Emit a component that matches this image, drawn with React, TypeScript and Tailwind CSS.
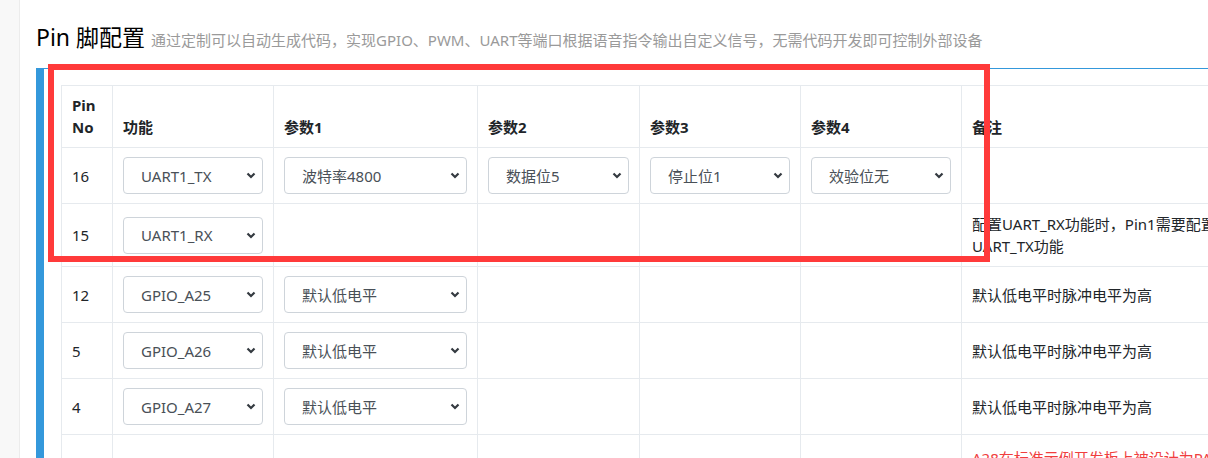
import React from "react";

type Row = {
  pin: string;
  fn: string;
  p1?: string;
  p2?: string;
  p3?: string;
  p4?: string;
  note?: React.ReactNode;
  danger?: boolean;
};

const rows: Row[] = [
  { pin: "16", fn: "UART1_TX", p1: "波特率4800", p2: "数据位5", p3: "停止位1", p4: "效验位无" },
  {
    pin: "15",
    fn: "UART1_RX",
    note: (
      <>
        配置UART_RX功能时，Pin1需要配置为
        <br />
        UART_TX功能
      </>
    ),
  },
  { pin: "12", fn: "GPIO_A25", p1: "默认低电平", note: "默认低电平时脉冲电平为高" },
  { pin: "5", fn: "GPIO_A26", p1: "默认低电平", note: "默认低电平时脉冲电平为高" },
  { pin: "4", fn: "GPIO_A27", p1: "默认低电平", note: "默认低电平时脉冲电平为高" },
  {
    pin: "3",
    fn: "GPIO_A28",
    p1: "默认低电平",
    danger: true,
    note: (
      <>
        A28在标准示例开发板上被设计为PA功放
        <br />
        使能引脚，配置为GPIO后可能导致
        <br />
        功放无法正常工作，如需使用
        <br />
        请自行修改硬件电路
      </>
    ),
  },
];

function Select({ value }: { value: string }) {
  return (
    <div className="flex h-[37px] w-full items-center justify-between rounded-[4px] border border-[#ced4da] bg-white pl-[17px] pr-[6px] text-[#495057]">
      <span className="whitespace-nowrap">{value}</span>
      <svg width="10" height="7" viewBox="0 0 10 7" className="shrink-0">
        <polyline points="1.5,1.5 5,5 8.5,1.5" fill="none" stroke="#343a40" strokeWidth="2.2" />
      </svg>
    </div>
  );
}

const cell = "border border-[#e6eaee] px-[10px] py-[9px] align-middle leading-[22px]";
const head = "border border-[#e6eaee] px-[10px] py-[9px] align-bottom text-left font-bold leading-[21.5px] text-[#212529]";

export default function App() {
  return (
    <div
      className="relative flex h-[458px] w-[1208px] overflow-hidden bg-white text-[15px] leading-[21.5px] text-[#212529]"
      style={{ fontFamily: '"Noto Sans", "Noto Sans CJK SC", sans-serif' }}
    >
      {/* side strip */}
      <div className="w-[20px] shrink-0 border-r border-[#ececec] bg-[#f8f8f8]" />

      <main className="flex-1 pl-[16px] pt-[22px]">
        <div className="flex items-baseline gap-[6px] whitespace-nowrap">
          <h1 className="text-[23px] leading-[30px] text-black">Pin 脚配置</h1>
          <span className="text-[15px] text-[#9a9a9a]">
            通过定制可以自动生成代码，实现GPIO、PWM、UART等端口根据语音指令输出自定义信号，无需代码开发即可控制外部设备
          </span>
        </div>

        <section className="mt-[16px] w-[1300px] border-l-8 border-t border-[#3498db] border-t-[#3498db] pl-[17px] pt-[16px]">
          <table className="w-[1240px] table-fixed border-collapse">
            <colgroup>
              <col className="w-[51px]" />
              <col className="w-[161px]" />
              <col className="w-[204px]" />
              <col className="w-[162px]" />
              <col className="w-[161px]" />
              <col className="w-[161px]" />
              <col />
            </colgroup>
            <thead>
              <tr>
                <th className={head}>
                  Pin
                  <br />
                  No
                </th>
                <th className={head}>功能</th>
                <th className={head}>参数1</th>
                <th className={head}>参数2</th>
                <th className={head}>参数3</th>
                <th className={head}>参数4</th>
                <th className={head}>备注</th>
              </tr>
            </thead>
            <tbody>
              {rows.map((r) => (
                <tr key={r.pin}>
                  <td className={cell}>{r.pin}</td>
                  <td className={cell}>
                    <Select value={r.fn} />
                  </td>
                  <td className={cell}>{r.p1 && <Select value={r.p1} />}</td>
                  <td className={cell}>{r.p2 && <Select value={r.p2} />}</td>
                  <td className={cell}>{r.p3 && <Select value={r.p3} />}</td>
                  <td className={cell}>{r.p4 && <Select value={r.p4} />}</td>
                  <td className={`${cell} ${r.danger ? "pt-[12px] text-[#f03e3e]" : ""}`}>{r.note}</td>
                </tr>
              ))}
            </tbody>
          </table>
        </section>
      </main>

      {/* annotation box */}
      <div className="pointer-events-none absolute left-[48px] top-[64px] h-[198px] w-[942px] border-[6px] border-[#ff3a3a]" />
    </div>
  );
}
